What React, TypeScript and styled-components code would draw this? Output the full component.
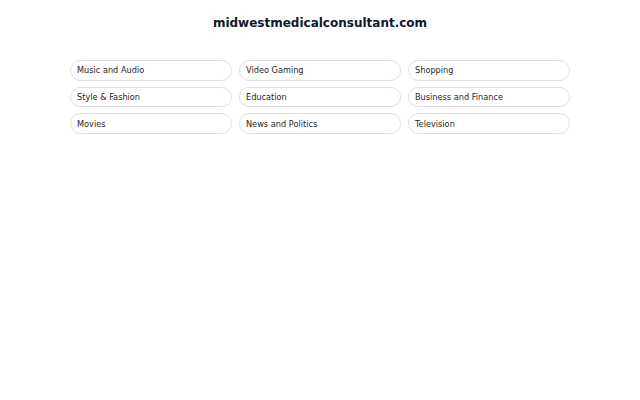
import React from "react";
import styled, { createGlobalStyle } from "styled-components";

const Global = createGlobalStyle`
  html, body { margin: 0; padding: 0; background: #ffffff; }
  body { font-family: "DejaVu Sans", sans-serif; }
  * { box-sizing: border-box; }
`;

const Page = styled.main`
  display: flex;
  flex-direction: column;
  align-items: center;
  padding-top: 15px;
`;

const Title = styled.h1`
  margin: 0;
  font-size: 12px;
  line-height: 16px;
  font-weight: 700;
  color: #111827;
`;

const Grid = styled.div`
  margin-top: 29px;
  width: 500px;
  display: grid;
  grid-template-columns: repeat(3, 1fr);
  column-gap: 7px;
  row-gap: 6.2px;
`;

const Chip = styled.a`
  display: flex;
  align-items: center;
  height: 20.5px;
  padding: 0 6px;
  border: 1px solid #e0e0e0;
  border-radius: 999px;
  font-size: 8.2px;
  color: #1f1f1f;
  text-decoration: none;
  background: #fff;
`;

const items = [
  "Music and Audio",
  "Video Gaming",
  "Shopping",
  "Style & Fashion",
  "Education",
  "Business and Finance",
  "Movies",
  "News and Politics",
  "Television",
];

export default function App() {
  return (
    <>
      <Global />
      <Page>
        <Title>midwestmedicalconsultant.com</Title>
        <Grid>
          {items.map((t) => (
            <Chip key={t} href="#">
              {t}
            </Chip>
          ))}
        </Grid>
      </Page>
    </>
  );
}
